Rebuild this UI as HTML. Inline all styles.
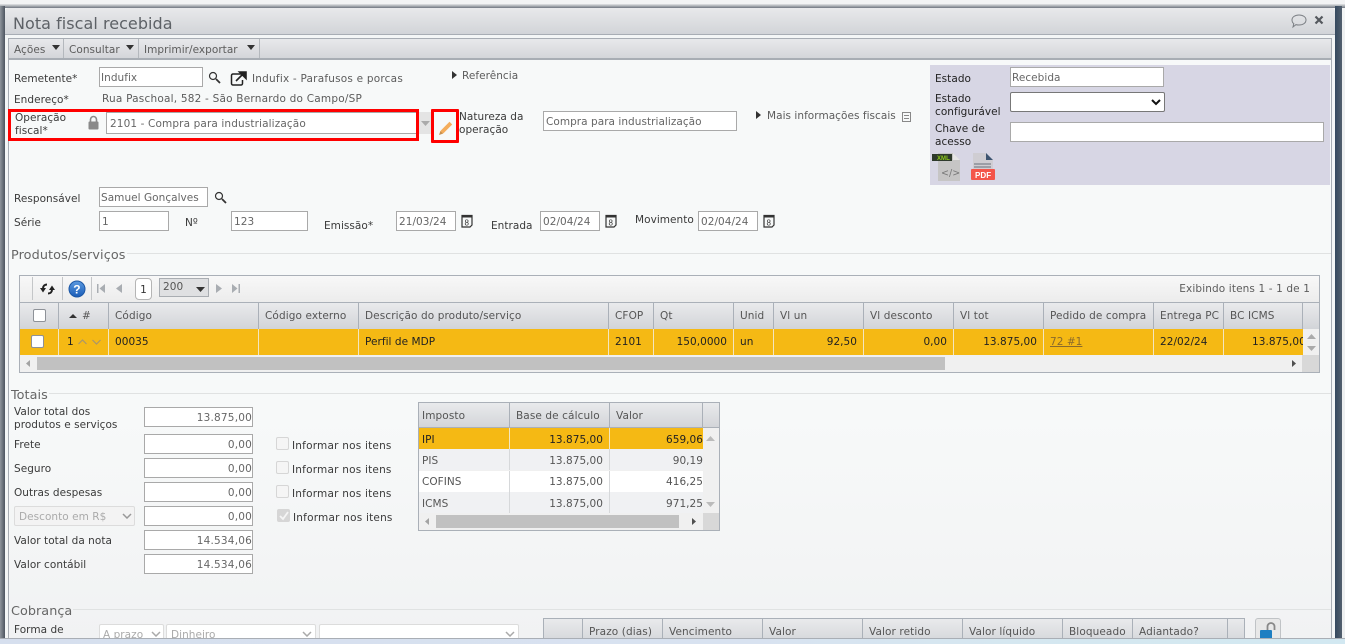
<!DOCTYPE html>
<html lang="pt"><head><meta charset="utf-8"><title>Nota fiscal recebida</title>
<style>
html,body{margin:0;padding:0;width:1345px;height:644px;overflow:hidden;background:#f4f6f6}
body{position:relative;font-family:"DejaVu Sans",Verdana,sans-serif;font-size:10.5px;letter-spacing:.04px;color:#333}
div,span.a,svg{position:absolute}
.t{position:absolute;white-space:nowrap;line-height:13px;color:#3a3a3a;margin-top:1px}
.v{color:#5c5c5c}
.r{text-align:right}
.w{letter-spacing:.21px}
.m{letter-spacing:.12px}
.i{position:absolute;box-sizing:border-box;background:#fff;border:1px solid #a9a9a9;height:20px;line-height:21px;padding-left:2px;color:#666;white-space:nowrap;overflow:hidden}
.n{text-align:right;padding:0;letter-spacing:.2px}
.hd{position:absolute;box-sizing:border-box;height:26px;line-height:27px;padding-left:6px;background:linear-gradient(#e9eaec,#d2d4d8);border-right:1px solid #aab0b8;color:#555;white-space:nowrap;overflow:hidden;letter-spacing:.1px}
.c{position:absolute;box-sizing:border-box;height:26px;line-height:26px;padding:0 6px;background:#f5b914;border-right:1px solid #f3e6c0;color:#222;white-space:nowrap;overflow:hidden}
.sel{position:absolute;box-sizing:border-box;background:#fff;border:1px solid #dcdcdc;border-radius:2px;color:#aaa;padding-left:4px;overflow:hidden;white-space:nowrap}
.leg{position:absolute;height:1px;background:#e0e2e2}
.sec{font-size:12.8px;color:#666}
.tc{position:absolute;box-sizing:border-box;height:21px;line-height:24px;padding:0 6px;white-space:nowrap;overflow:hidden;color:#555;border-right:1px solid #d6d8da}
.cb{position:absolute;box-sizing:border-box;width:13px;height:13px;border:1px solid #d6d6d6;border-radius:2px;background:#f5f5f5}
</style></head><body>

<!-- outer frame -->
<div style="left:0;top:0;width:1345px;height:4px;background:#f2f3f4"></div>
<div style="left:0;top:4px;width:1345px;height:4px;background:linear-gradient(#e4e5e7,#6f7680)"></div>
<div style="left:0;top:6px;width:5px;height:632px;background:linear-gradient(90deg,#8f959c,#4d5560)"></div>
<div style="left:1335px;top:6px;width:7px;height:632px;background:linear-gradient(90deg,#35495f,#53606e)"></div>
<div style="left:1342px;top:20px;width:3px;height:618px;background:#eef0f1"></div>

<!-- title bar -->
<div style="left:5px;top:8px;width:1330px;height:27px;background:linear-gradient(#e8e9eb,#d2d4d8);border-bottom:1px solid #a8adb4;border-radius:4px 4px 0 0;box-sizing:border-box"></div>
<div class="t" style="left:13px;top:13px;font-size:16px;line-height:20px;color:#5d6166">Nota fiscal recebida</div>
<svg style="left:1290px;top:13px" width="18" height="16" viewBox="0 0 18 16"><path d="M9 2c4 0 7 2 7 5s-3 5-7 5c-1 0-2 0-3-.4L3 14l.8-3.4C2.400 9.600 2 8.300 2 7c0-3 3-5 7-5z" fill="none" stroke="#7b7f84" stroke-width="1"/></svg>
<svg style="left:1314px;top:15px" width="10" height="10" viewBox="0 0 10 10"><path d="M1.500 1.500l7 7M8.500 1.500l-7 7" stroke="#55595e" stroke-width="2.200"/></svg>

<!-- content panel -->
<div style="left:8px;top:38px;width:1324px;height:600px;box-sizing:border-box;border:1px solid #a8adb4;border-bottom:0;background:linear-gradient(#f7f9f9 0,#f7f9f9 380px,#f1f2f3 600px)"></div>

<!-- menu bar -->
<div style="left:9px;top:39px;width:1322px;height:21px;box-sizing:border-box;background:linear-gradient(#e8e9eb,#d4d6da);border-bottom:2px solid #a8adb4"></div>
<div style="left:63px;top:39px;width:1px;height:19px;background:#b4b8bd"></div>
<div style="left:138px;top:39px;width:1px;height:19px;background:#b4b8bd"></div>
<div style="left:259px;top:39px;width:1px;height:19px;background:#b4b8bd"></div>
<div class="t v" style="left:14px;top:43px">Ações</div>
<div class="t v" style="left:69px;top:43px">Consultar</div>
<div class="t v" style="left:144px;top:43px">Imprimir/exportar</div>
<svg style="left:52px;top:45px" width="8" height="5"><path d="M0 0h8L4 5z" fill="#333"/></svg>
<svg style="left:126px;top:45px" width="8" height="5"><path d="M0 0h8L4 5z" fill="#333"/></svg>
<svg style="left:247px;top:45px" width="8" height="5"><path d="M0 0h8L4 5z" fill="#333"/></svg>

<!-- header form -->
<div class="t" style="left:14px;top:72px">Remetente*</div>
<div class="i" style="left:99px;top:67px;width:104px;padding-left:1px">Indufix</div>
<svg style="left:208px;top:71px" width="13" height="13" viewBox="0 0 13 13"><circle cx="5" cy="5" r="3.500" fill="none" stroke="#333" stroke-width="1.200"/><path d="M8 8l4 4" stroke="#333" stroke-width="1.800"/></svg>
<svg style="left:230px;top:71px" width="17" height="15" viewBox="0 0 17 15"><path d="M11 3H3a1.500 1.500 0 0 0-1.500 1.500v8A1.500 1.500 0 0 0 3 14h8a1.500 1.500 0 0 0 1.500-1.500V9" fill="none" stroke="#222" stroke-width="1.500"/><path d="M6 10L14 2M9.500 1H16v6.500z" stroke="#222" stroke-width="1.600" fill="#222"/></svg>
<div class="t v w" style="left:252px;top:72px">Indufix - Parafusos e porcas</div>
<svg style="left:452px;top:71px" width="5" height="8"><path d="M0 0l5 4-5 4z" fill="#333"/></svg>
<div class="t v" style="left:462px;top:69px">Referência</div>

<div class="t" style="left:14px;top:93px">Endereço*</div>
<div class="t v w" style="left:102px;top:92px">Rua Paschoal, 582 - São Bernardo do Campo/SP</div>

<div class="t" style="left:15px;top:111px">Operação</div>
<div class="t" style="left:15px;top:124px">fiscal*</div>
<svg style="left:87px;top:115px" width="13" height="15" viewBox="0 0 13 15"><path d="M3.500 7V4.500a3 3 0 0 1 6 0V7" fill="none" stroke="#8a8a8a" stroke-width="1.600"/><rect x="1.500" y="6.500" width="10" height="8" rx="1" fill="#8a8a8a"/></svg>
<div class="i m" style="left:106px;top:112px;width:313px;line-height:22px;height:22px;padding-left:3px">2101 - Compra para industrialização</div>
<div style="left:419px;top:112px;width:14px;height:22px;background:#e4e4e4"></div>
<svg style="left:421px;top:121px" width="9" height="5"><path d="M0 0h9L4.500 5z" fill="#aaa"/></svg>
<div style="left:8px;top:109px;width:411px;height:32px;box-sizing:border-box;border:3px solid #f00"></div>
<div style="left:431px;top:109px;width:28px;height:34px;box-sizing:border-box;border:3px solid #f00;border-radius:1px"></div>
<svg style="left:438px;top:120px" width="16" height="16" viewBox="0 0 16 16"><path d="M1.500 14.500l1.300-4 8.700-8.700 2.700 2.700-8.700 8.700z" fill="#f4ad5c"/><path d="M1 15l1.400-4 2.600 2.600z" fill="#c99150"/></svg>
<div class="t" style="left:459px;top:110px">Natureza da</div>
<div class="t" style="left:459px;top:123px">operação</div>
<div class="i" style="left:543px;top:111px;width:194px">Compra para industrialização</div>
<svg style="left:756px;top:111px" width="5" height="8"><path d="M0 0l5 4-5 4z" fill="#333"/></svg>
<div class="t v" style="left:767px;top:109px">Mais informações fiscais</div>
<svg style="left:902px;top:112px" width="9" height="10" viewBox="0 0 9 10"><path d="M.500.500h8v9h-8zM2 3.500h5M2 6.500h5" fill="none" stroke="#888" stroke-width="1"/></svg>

<!-- state panel -->
<div style="left:930px;top:65px;width:400px;height:120px;background:#d7d6e4"></div>
<div class="t" style="left:935px;top:72px;color:#222">Estado</div>
<div class="i" style="left:1010px;top:67px;width:154px;padding-left:1px">Recebida</div>
<div class="t" style="left:935px;top:92px;color:#222">Estado</div>
<div class="t" style="left:935px;top:105px;color:#222">configurável</div>
<div class="i" style="left:1010px;top:92px;width:155px;border-radius:2px;border-color:#777"></div>
<svg style="left:1151px;top:99px" width="10" height="7" viewBox="0 0 10 7"><path d="M1 1l4 4 4-4" fill="none" stroke="#111" stroke-width="2"/></svg>
<div class="t" style="left:935px;top:122px;color:#222">Chave de</div>
<div class="t" style="left:935px;top:135px;color:#222">acesso</div>
<div class="i" style="left:1010px;top:122px;width:314px"></div>
<!-- xml / pdf icons -->
<svg style="left:932px;top:152px" width="30" height="30" viewBox="0 0 30 30"><path d="M6 1h15l7 7v21H6z" fill="#c6c5c5"/><path d="M21 1l7 7h-7z" fill="#e6e6e6"/><rect x="0" y="2" width="20" height="7" fill="#2e3a2c"/><text x="5" y="8" font-size="6" font-weight="bold" fill="#8ecb1a" font-family="Liberation Sans,sans-serif">XML</text><text x="9" y="24" font-size="9.5" fill="#777" font-family="DejaVu Sans,sans-serif">&lt;/&gt;</text></svg>
<svg style="left:970px;top:152px" width="26" height="30" viewBox="0 0 26 30"><path d="M3 1h13l7 7v20H3z" fill="#cfcdd2"/><path d="M16 1l7 7h-7z" fill="#3d5470"/><path d="M4 12h17M4 15h17" stroke="#68707a" stroke-width="1"/><rect x="1" y="17" width="24" height="11" rx="1" fill="#f4554a"/><text x="5" y="26" font-size="8" font-weight="bold" fill="#fff" font-family="Liberation Sans,sans-serif">PDF</text></svg>

<div class="t" style="left:14px;top:192px">Responsável</div>
<div class="i" style="left:99px;top:187px;width:109px;padding-left:1px">Samuel Gonçalves</div>
<svg style="left:214px;top:191px" width="13" height="13" viewBox="0 0 13 13"><circle cx="5" cy="5" r="3.500" fill="none" stroke="#333" stroke-width="1.200"/><path d="M8 8l4 4" stroke="#333" stroke-width="1.800"/></svg>

<div class="t" style="left:14px;top:216px">Série</div>
<div class="i" style="left:99px;top:211px;width:70px">1</div>
<div class="t" style="left:185px;top:216px">Nº</div>
<div class="i" style="left:231px;top:211px;width:77px">123</div>
<div class="t" style="left:324px;top:219px">Emissão*</div>
<div class="i" style="left:396px;top:211px;width:60px">21/03/24</div>
<div class="t" style="left:491px;top:219px">Entrada</div>
<div class="i" style="left:540px;top:211px;width:60px">02/04/24</div>
<div class="t" style="left:635px;top:213px">Movimento</div>
<div class="i" style="left:698px;top:211px;width:60px">02/04/24</div>
<svg style="left:461px;top:214px" width="12" height="14" viewBox="0 0 12 14"><path d="M1 1.500h10v9.500l-2 2H1z" fill="none" stroke="#333" stroke-width="1.200"/><path d="M1 2.500h10" stroke="#333" stroke-width="2"/><text x="3.500" y="11.500" font-size="8" fill="#333" font-family="Liberation Sans,sans-serif">8</text></svg>
<svg style="left:605px;top:214px" width="12" height="14" viewBox="0 0 12 14"><path d="M1 1.500h10v9.500l-2 2H1z" fill="none" stroke="#333" stroke-width="1.200"/><path d="M1 2.500h10" stroke="#333" stroke-width="2"/><text x="3.500" y="11.500" font-size="8" fill="#333" font-family="Liberation Sans,sans-serif">8</text></svg>
<svg style="left:763px;top:214px" width="12" height="14" viewBox="0 0 12 14"><path d="M1 1.500h10v9.500l-2 2H1z" fill="none" stroke="#333" stroke-width="1.200"/><path d="M1 2.500h10" stroke="#333" stroke-width="2"/><text x="3.500" y="11.500" font-size="8" fill="#333" font-family="Liberation Sans,sans-serif">8</text></svg>

<!-- Produtos/serviços -->
<div class="t sec" style="left:11px;top:248px;letter-spacing:.1px">Produtos/serviços</div>
<div class="leg" style="left:127px;top:253px;width:1204px"></div>

<div style="left:19px;top:275px;width:1301px;height:98px;box-sizing:border-box;border:1px solid #aab0b8;background:#f0f0f0"></div>
<div style="left:20px;top:276px;width:1299px;height:26px;background:linear-gradient(#f8f8f8,#ececec)"></div>
<div style="left:32px;top:277px;width:1px;height:23px;background:#c4c6c8"></div>
<div style="left:62px;top:277px;width:1px;height:23px;background:#c4c6c8"></div>
<div style="left:91px;top:277px;width:1px;height:23px;background:#c4c6c8"></div>
<svg style="left:40px;top:283px" width="15" height="12" viewBox="0 0 15 12"><path d="M7 1.500C4.500 1.500 3 3 3 5.500M8 10.500c2.500 0 4-1.500 4-4" fill="none" stroke="#222" stroke-width="2"/><path d="M0 5h6L3 9.500zM9 7h6L12 2.500z" fill="#222"/></svg>
<svg style="left:68px;top:280px" width="18" height="18" viewBox="0 0 18 18"><defs><linearGradient id="g" x1="0" y1="0" x2="0" y2="1"><stop offset="0" stop-color="#5b9ae0"/><stop offset="1" stop-color="#1a5cb8"/></linearGradient></defs><circle cx="9" cy="9" r="8" fill="url(#g)" stroke="#1c57a5"/><text x="5.200" y="13.500" font-size="12" font-weight="bold" fill="#fff" font-family="Liberation Sans,sans-serif">?</text></svg>
<svg style="left:97px;top:284px" width="8" height="9"><path d="M0 0h1.500v9H0zM8 0v9L2.500 4.500z" fill="#a9adb2"/></svg>
<svg style="left:116px;top:284px" width="6" height="9"><path d="M6 0v9L0 4.500z" fill="#a9adb2"/></svg>
<div style="left:135px;top:278px;width:17px;height:22px;box-sizing:border-box;background:#fff;border:1px solid #b5b5b5;border-radius:4px;text-align:center;line-height:22px">1</div>
<div style="left:159px;top:278px;width:50px;height:19px;box-sizing:border-box;background:#dfe0e2;border:1px solid #a9adb2;line-height:16px;padding-left:3px;color:#555">200</div>
<svg style="left:196px;top:287px" width="9" height="5"><path d="M0 0h9L4.500 5z" fill="#333"/></svg>
<svg style="left:216px;top:284px" width="6" height="9"><path d="M0 0v9l6-4.500z" fill="#a9adb2"/></svg>
<svg style="left:232px;top:284px" width="8" height="9"><path d="M0 0v9l5.500-4.500zM6.500 0H8v9H6.500z" fill="#a9adb2"/></svg>
<div class="t v m" style="right:35px;top:282px">Exibindo itens 1 - 1 de 1</div>

<!-- product grid -->
<div style="left:20px;top:302px;width:1299px;height:1px;background:#aab0b8"></div>
<div class="hd" style="left:20px;top:303px;width:39px"></div>
<div class="hd" style="left:59px;top:303px;width:50px;padding-left:23px">#</div>
<div class="hd" style="left:109px;top:303px;width:150px">Código</div>
<div class="hd" style="left:259px;top:303px;width:100px">Código externo</div>
<div class="hd" style="left:359px;top:303px;width:250px">Descrição do produto/serviço</div>
<div class="hd" style="left:609px;top:303px;width:45px">CFOP</div>
<div class="hd" style="left:654px;top:303px;width:80px">Qt</div>
<div class="hd" style="left:734px;top:303px;width:40px">Unid</div>
<div class="hd" style="left:774px;top:303px;width:90px">Vl un</div>
<div class="hd" style="left:864px;top:303px;width:90px">Vl desconto</div>
<div class="hd" style="left:954px;top:303px;width:90px">Vl tot</div>
<div class="hd" style="left:1044px;top:303px;width:110px">Pedido de compra</div>
<div class="hd" style="left:1154px;top:303px;width:70px">Entrega PC</div>
<div class="hd" style="left:1224px;top:303px;width:79px">BC ICMS</div>
<div class="hd" style="left:1303px;top:303px;width:16px;border-right:0"></div>
<div style="left:33px;top:309px;width:13px;height:13px;box-sizing:border-box;background:#fff;border:1px solid #8e9298;border-radius:2px"></div>
<svg style="left:69px;top:314px" width="8" height="4"><path d="M0 4h8L4 0z" fill="#333"/></svg>

<div class="c" style="left:20px;top:329px;width:39px"></div>
<div class="c" style="left:59px;top:329px;width:50px;padding-left:8px">1</div>
<div class="c" style="left:109px;top:329px;width:150px">00035</div>
<div class="c" style="left:259px;top:329px;width:100px"></div>
<div class="c" style="left:359px;top:329px;width:250px">Perfil de MDP</div>
<div class="c" style="left:609px;top:329px;width:45px">2101</div>
<div class="c r" style="left:654px;top:329px;width:80px">150,0000</div>
<div class="c" style="left:734px;top:329px;width:40px">un</div>
<div class="c r" style="left:774px;top:329px;width:90px">92,50</div>
<div class="c r" style="left:864px;top:329px;width:90px">0,00</div>
<div class="c r" style="left:954px;top:329px;width:90px">13.875,00</div>
<div class="c" style="left:1044px;top:329px;width:110px"><u style="color:#8a6a2c">72 #1</u></div>
<div class="c" style="left:1154px;top:329px;width:70px">22/02/24</div>
<div class="c" style="left:1224px;top:329px;width:79px;padding:0 0 0 28px;border-right:0">13.875,00</div>
<div style="left:31px;top:335px;width:13px;height:13px;box-sizing:border-box;background:#fff;border:1px solid #8e9298;border-radius:2px"></div>
<svg style="left:78px;top:339px" width="9" height="6"><path d="M.5 5L4.500 1l4 4" fill="none" stroke="#a9966a" stroke-width="1.200"/></svg>
<svg style="left:92px;top:339px" width="9" height="6"><path d="M.5 1l4 4 4-4" fill="none" stroke="#a9966a" stroke-width="1.200"/></svg>
<div style="left:1303px;top:329px;width:16px;height:26px;background:#f0f0f0"></div>
<svg style="left:1307px;top:334px" width="9" height="5"><path d="M0 5h9L4.500 0z" fill="#aaa"/></svg>
<svg style="left:1307px;top:346px" width="9" height="5"><path d="M0 0h9L4.500 5z" fill="#aaa"/></svg>
<div style="left:20px;top:355px;width:1283px;height:17px;background:#f0f0f0"></div>
<div style="left:37px;top:357px;width:908px;height:13px;background:#c1c1c1"></div>
<svg style="left:26px;top:360px" width="4" height="7"><path d="M4 0v7L0 3.500z" fill="#a3a3a3"/></svg>
<svg style="left:1292px;top:360px" width="4" height="7"><path d="M0 0v7l4-3.500z" fill="#505050"/></svg>
<div style="left:1302px;top:355px;width:17px;height:17px;background:#d8d8d8"></div>

<!-- Totais -->
<div class="t sec" style="left:11px;top:388px">Totais</div>
<div class="leg" style="left:49px;top:393px;width:1282px"></div>
<div class="t" style="left:14px;top:405px">Valor total dos</div>
<div class="t" style="left:14px;top:418px">produtos e serviços</div>
<div class="i n" style="left:144px;top:407px;width:109px">13.875,00</div>
<div class="t" style="left:14px;top:438px">Frete</div>
<div class="i n" style="left:144px;top:434px;width:109px">0,00</div>
<div class="t" style="left:14px;top:462px">Seguro</div>
<div class="i n" style="left:144px;top:458px;width:109px">0,00</div>
<div class="t" style="left:14px;top:486px">Outras despesas</div>
<div class="i n" style="left:144px;top:482px;width:109px">0,00</div>
<div class="sel" style="left:14px;top:506px;width:121px;height:20px;line-height:20px;background:#f3f3f3">Desconto em R$</div>
<svg style="left:122px;top:513px" width="10" height="6"><path d="M1 1l4 4 4-4" fill="none" stroke="#999" stroke-width="1.500"/></svg>
<div class="i n" style="left:144px;top:506px;width:109px">0,00</div>
<div class="t" style="left:14px;top:534px">Valor total da nota</div>
<div class="i n" style="left:144px;top:530px;width:109px">14.534,06</div>
<div class="t" style="left:14px;top:558px">Valor contábil</div>
<div class="i n" style="left:144px;top:554px;width:109px">14.534,06</div>

<div class="cb" style="left:276px;top:437px"></div>
<div class="t w" style="left:292px;top:439px">Informar nos itens</div>
<div class="cb" style="left:276px;top:461px"></div>
<div class="t w" style="left:292px;top:463px">Informar nos itens</div>
<div class="cb" style="left:276px;top:485px"></div>
<div class="t w" style="left:292px;top:487px">Informar nos itens</div>
<div class="cb" style="left:277px;top:509px;background:#d6d6d6"></div>
<svg style="left:279px;top:511px" width="10" height="10"><path d="M1 5l3 3 5-7" fill="none" stroke="#f5f5f5" stroke-width="1.800"/></svg>
<div class="t w" style="left:293px;top:511px">Informar nos itens</div>

<!-- tax grid -->
<div style="left:418px;top:402px;width:302px;height:129px;box-sizing:border-box;border:1px solid #aab0b8;background:#f0f0f0"></div>
<div class="hd" style="left:419px;top:403px;width:91px;height:25px;padding-left:3px">Imposto</div>
<div class="hd" style="left:510px;top:403px;width:100px;height:25px">Base de cálculo</div>
<div class="hd" style="left:610px;top:403px;width:93px;height:25px">Valor</div>
<div class="hd" style="left:703px;top:403px;width:16px;height:25px;border-right:0"></div>
<div style="left:419px;top:427px;width:300px;height:1px;background:#aab0b8"></div>

<div class="tc" style="left:419px;top:428px;width:91px;background:#f5b914;color:#222;padding-left:3px;border-color:#f3e6c0">IPI</div>
<div class="tc r" style="left:510px;top:428px;width:100px;background:#f5b914;color:#222;border-color:#f3e6c0">13.875,00</div>
<div class="tc r" style="left:610px;top:428px;width:93px;background:#f5b914;color:#222;padding-right:0;border:0">659,06</div>
<div class="tc" style="left:419px;top:449px;width:91px;background:#f0f1f3;padding-left:3px">PIS</div>
<div class="tc r" style="left:510px;top:449px;width:100px;background:#f0f1f3">13.875,00</div>
<div class="tc r" style="left:610px;top:449px;width:93px;background:#f0f1f3;padding-right:0;border:0">90,19</div>
<div class="tc" style="left:419px;top:471px;width:91px;background:#fff;padding-left:3px;line-height:22px">COFINS</div>
<div class="tc r" style="left:510px;top:471px;width:100px;background:#fff;line-height:22px">13.875,00</div>
<div class="tc r" style="left:610px;top:471px;width:93px;background:#fff;padding-right:0;border:0;line-height:22px">416,25</div>
<div class="tc" style="left:419px;top:492px;width:91px;background:#f0f1f3;padding-left:3px">ICMS</div>
<div class="tc r" style="left:510px;top:492px;width:100px;background:#f0f1f3">13.875,00</div>
<div class="tc r" style="left:610px;top:492px;width:93px;background:#f0f1f3;padding-right:0;border:0">971,25</div>
<svg style="left:706px;top:436px" width="9" height="5"><path d="M0 5h9L4.500 0z" fill="#bbb"/></svg>
<svg style="left:706px;top:502px" width="9" height="5"><path d="M0 0h9L4.500 5z" fill="#bbb"/></svg>
<div style="left:436px;top:515px;width:243px;height:13px;background:#c1c1c1"></div>
<svg style="left:425px;top:518px" width="4" height="7"><path d="M4 0v7L0 3.500z" fill="#a3a3a3"/></svg>
<svg style="left:692px;top:518px" width="4" height="7"><path d="M0 0v7l4-3.500z" fill="#505050"/></svg>
<div style="left:703px;top:513px;width:16px;height:17px;background:#d8d8d8"></div>

<!-- Cobrança -->
<div class="t sec" style="left:11px;top:604px">Cobrança</div>
<div class="leg" style="left:73px;top:609px;width:1258px"></div>
<div class="t" style="left:14px;top:623px">Forma de</div>
<div class="sel" style="left:99px;top:624px;width:65px;height:24px;line-height:20px;padding-left:3px">A prazo</div>
<svg style="left:151px;top:631px" width="10" height="6"><path d="M1 1l4 4 4-4" fill="none" stroke="#aaa" stroke-width="1.500"/></svg>
<div class="sel" style="left:166px;top:624px;width:150px;height:24px;line-height:20px;padding-left:4px">Dinheiro</div>
<svg style="left:302px;top:631px" width="10" height="6"><path d="M1 1l4 4 4-4" fill="none" stroke="#aaa" stroke-width="1.500"/></svg>
<div class="sel" style="left:319px;top:624px;width:200px;height:24px"></div>
<svg style="left:505px;top:631px" width="10" height="6"><path d="M1 1l4 4 4-4" fill="none" stroke="#aaa" stroke-width="1.500"/></svg>

<div style="left:543px;top:618px;width:702px;height:1px;background:#aab0b8"></div>
<div class="hd" style="left:543px;top:619px;width:40px;border-left:1px solid #aab0b8"></div>
<div class="hd" style="left:583px;top:619px;width:80px">Prazo (dias)</div>
<div class="hd" style="left:663px;top:619px;width:100px">Vencimento</div>
<div class="hd" style="left:763px;top:619px;width:100px">Valor</div>
<div class="hd" style="left:863px;top:619px;width:100px">Valor retido</div>
<div class="hd" style="left:963px;top:619px;width:100px">Valor líquido</div>
<div class="hd" style="left:1063px;top:619px;width:70px">Bloqueado</div>
<div class="hd" style="left:1133px;top:619px;width:95px">Adiantado?</div>
<div class="hd" style="left:1228px;top:619px;width:17px"></div>
<div style="left:1255px;top:618px;width:26px;height:26px;box-sizing:border-box;background:#e8e8e8;border:1px solid #c0c3c6;border-radius:3px"></div>
<svg style="left:1259px;top:621px" width="18" height="20" viewBox="0 0 18 20"><path d="M8.500 9V5.500a3.500 3.500 0 0 1 7 0V9" fill="none" stroke="#888" stroke-width="1.800"/><rect x="1" y="9" width="12" height="9" rx="1" fill="#1e7fc2"/></svg>

<!-- bottom strip -->
<div style="left:0;top:638px;width:1345px;height:6px;background:linear-gradient(90deg,#d6dfee 0,#d8e2f0 55%,#d5e7f0 75%,#d2e8f1 100%);border-top:1px solid #a9aeb5;box-sizing:border-box"></div>
</body></html>
